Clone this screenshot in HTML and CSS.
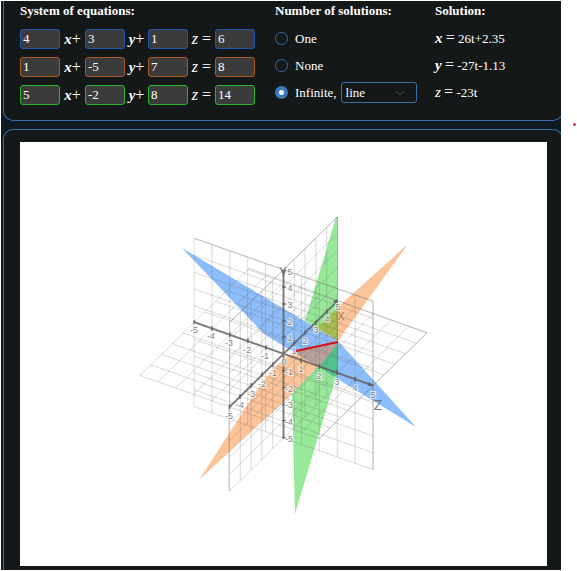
FILE: index.html
```html
<!DOCTYPE html>
<html lang="en">
<head>
<meta charset="utf-8">
<title>Systems of equations</title>
<link rel="stylesheet" href="styles.css">
</head>
<body>
<main class="shell">
  <form class="panel controls">
    <section class="system">
      <h2>System of equations:</h2>
      <div class="equation blue">
        <input aria-label="First x coefficient" value="4"><span class="var"><b>x</b>+</span>
        <input aria-label="First y coefficient" value="3"><span class="var"><b>y</b>+</span>
        <input aria-label="First z coefficient" value="1"><span class="var"><i>z</i> =</span>
        <input aria-label="First constant" value="6">
      </div>
      <div class="equation orange">
        <input aria-label="Second x coefficient" value="1"><span class="var"><b>x</b>+</span>
        <input aria-label="Second y coefficient" value="-5"><span class="var"><b>y</b>+</span>
        <input aria-label="Second z coefficient" value="7"><span class="var"><i>z</i> =</span>
        <input aria-label="Second constant" value="8">
      </div>
      <div class="equation green">
        <input aria-label="Third x coefficient" value="5"><span class="var"><b>x</b>+</span>
        <input aria-label="Third y coefficient" value="-2"><span class="var"><b>y</b>+</span>
        <input aria-label="Third z coefficient" value="8"><span class="var"><i>z</i> =</span>
        <input aria-label="Third constant" value="14">
      </div>
    </section>
    <section class="count">
      <h2>Number of solutions:</h2>
      <div class="line"><input type="radio" name="count" id="one"><label for="one">One</label></div>
      <div class="line"><input type="radio" name="count" id="none"><label for="none">None</label></div>
      <div class="line"><input type="radio" name="count" id="infinite" checked><label for="infinite">Infinite,</label>
        <span class="pick">
          <select aria-label="Kind of intersection"><option>line</option><option>plane</option></select>
          <svg class="chevron" viewBox="0 0 10 6"><path d="M1 1l4 4 4-4"/></svg>
        </span>
      </div>
    </section>
    <section class="solution">
      <h2>Solution:</h2>
      <div class="line"><span><b class="math">x</b> <span class="eq">=</span> 26t+2.35</span></div>
      <div class="line"><span><b class="math">y</b> <span class="eq">=</span> -27t-1.13</span></div>
      <div class="line"><span><i class="math">z</i> <span class="eq">=</span> -23t</span></div>
    </section>
  </form>
  <section class="panel graph">
    <svg class="plot" viewBox="20 142 527 424" role="img" aria-label="Three planes meeting in a line">
      <defs>
        <path id="grid" d="M-4-5V5M-3-5V5M-2-5V5M-1-5V5M0-5V5M1-5V5M2-5V5M3-5V5M4-5V5M-5-4H5M-5-3H5M-5-2H5M-5-1H5M-5 0H5M-5 1H5M-5 2H5M-5 3H5M-5 4H5M-5-5H5V5H-5Z"/>
      </defs>
      <!-- planes -->
      <path class="fill-green" d="M336 217L338 217L338 341L305 321Z"/>
      <path class="fill-orange" d="M408 244L338 341L317 328L338 307Z"/>
      <path class="fill-olive" d="M338 307L338 341L317 328Z"/>
      <path class="fill-blue" d="M182 248L338 341L416 427L264 334Z"/>
      <path class="fill-orange" d="M285 358L296 351L338 341L338 345L292 394L199 480L259 387L272 370Z"/>
      <path class="fill-green" d="M292 394L338 345L338 372L333 387L295 514Z"/>
      <path class="fill-brown" d="M296 351L338 341L338 345L319 367L293 352Z"/>
      <path class="fill-teal" d="M338 343L338 375L333 376L319 367Z"/>
      <!-- coordinate grids -->
      <g class="grids">
        <use href="#grid" transform="matrix(17.9 6.3 0 16.8 283.5 354)"/>
        <use href="#grid" transform="matrix(10.8 -10.6 0 16.8 283.5 354)"/>
        <use href="#grid" transform="matrix(17.9 6.3 10.8 -10.6 283.5 354)"/>
      </g>
      <path class="edge" d="M194 238L373 301V470M229 323L337 217M229 491V407M319 439L427 333L248 268"/>
      <!-- axes and ticks -->
      <path class="axis" d="M194 322L373 385.500M229.500 407L337.500 301M283.500 270V438"/>
      <path class="tick" d="M194 320v4M212 326v5M230 332v5M248 338v5M266 345v5M301 358v5M319 364v5M337 370v5M355 377v5M229.500 404v5M240 394v5M251 383v5M262 372v5M273 362v5M294 340v5M305 330v5M316 320v5M327 309v5M282 287h4M282 304h4M282 321h4M282 337h4M282 371h4M282 388h4M282 405h4M282 421h4M282 438h4"/>
      <path class="arrow" d="M374 386l-5-4-1 4ZM338 299l-5 2 3 3ZM281 270h5l-2 6Z"/>
      <g class="numbers">
        <text x="194" y="333">-5</text><text x="211" y="339">-4</text><text x="229" y="346">-3</text><text x="247" y="353">-2</text><text x="265" y="359">-1</text>
        <text x="301" y="372">1</text><text x="319" y="379">2</text><text x="337" y="385">3</text><text x="355" y="391">4</text><text x="373" y="398">5</text>
        <text x="229" y="419">-5</text><text x="240" y="408">-4</text><text x="251" y="397">-3</text><text x="262" y="387">-2</text><text x="273" y="376">-1</text><text x="284" y="365">0</text>
        <text x="294" y="354">1</text><text x="305" y="344">2</text><text x="316" y="333">3</text><text x="327" y="322">4</text><text x="338" y="310">5</text>
        <text x="290" y="275">5</text><text x="290" y="291">4</text><text x="290" y="308">3</text><text x="290" y="325">2</text><text x="290" y="341">1</text>
        <text x="289" y="375">-1</text><text x="289" y="392">-2</text><text x="289" y="408">-3</text><text x="289" y="425">-4</text><text x="289" y="442">-5</text>
      </g>
      <text class="axis-name" x="283" y="276">Y</text>
      <text class="axis-name z" x="378" y="410">Z</text>
      <text class="axis-name x" x="341" y="320">X</text>
      <path class="intersection" d="M296 351L338 342"/>
    </svg>
  </section>
</main>
<aside class="gutter"><span class="dot"></span></aside>
</body>
</html>
```
FILE: styles.css
```css
* { box-sizing: border-box; }
body {
  margin: 0;
  padding: 1px 0 1px 1px;
  display: flex;
  background: #fff;
  color: #fff;
  font: 14px/16px "Liberation Serif", serif;
}
.shell {
  flex: 1;
  min-width: 0;
  overflow: hidden;
  background: #101a22;
  padding-left: 2px;
}
.panel {
  margin-right: -2px;
  background: #141818;
  border: 1px solid #356fa5;
}
.controls {
  border-top: 0;
  border-radius: 0 0 10px 10px;
  display: grid;
  grid-template-columns: 255px 160px 1fr;
  padding: 2px 0 13px 16px;
}
h2 {
  margin: 0 0 9px;
  font-size: 13px;
  line-height: 16px;
}
.equation {
  display: grid;
  grid-template-columns: 40px 25px 40px 23px 40px 27px 40px;
  height: 20px;
  margin-bottom: 8px;
}
.equation:last-child { margin-bottom: 2px; }
.system h2 { margin-bottom: 10px; }
.equation input {
  width: 40px;
  height: 20px;
  padding: 0 2px;
  border: 1px solid #1f57b0;
  border-radius: 3px;
  background: #3b3b3b;
  color: #fff;
  font: inherit;
  font-size: 13px;
}
.orange input { border-color: #ac5820; }
.green input { border-color: #28b52c; }
.var {
  text-align: center;
  font-size: 16px;
  line-height: 20px;
  white-space: nowrap;
}
.var b, .math { font-style: italic; font-size: 15px; }
.line {
  display: flex;
  align-items: center;
  height: 27px;
  white-space: nowrap;
  font-size: 13px;
}
.count h2, .solution h2 { margin-bottom: 6px; }
.line label { margin-left: 7px; }
.line input {
  appearance: none;
  width: 13px;
  height: 13px;
  margin: 0;
  border: 1px solid #356fa5;
  border-radius: 50%;
}
.line input:checked {
  border: 4px solid #387cba;
  background: #fff;
}
.pick {
  position: relative;
  margin-left: 4px;
}
.pick select {
  display: block;
  appearance: none;
  width: 76px;
  height: 21px;
  padding: 0 4px;
  border: 1px solid #356fa5;
  border-radius: 3px;
  background: #141818;
  color: #fff;
  font: inherit;
}
.chevron {
  position: absolute;
  right: 12px;
  top: 8px;
  width: 10px;
  height: 6px;
  fill: none;
  stroke: #454b4e;
  pointer-events: none;
}
.eq { font-size: 16px; }
.graph {
  margin-top: 8px;
  border-bottom: 0;
  border-radius: 10px 10px 0 0;
  padding: 12px 15px 4px 16px;
}
.plot {
  display: block;
  width: 100%;
  background: #fff;
}
.fill-blue { fill: #8dbdfa; }
.fill-orange { fill: #fdc499; }
.fill-green { fill: #98e899; }
.fill-olive { fill: #a6bd50; }
.fill-brown { fill: #baa09d; }
.fill-teal { fill: #4fc48e; }
.grids {
  fill: none;
  stroke: #666;
  stroke-opacity: .24;
  stroke-width: 1;
}
.grids use, #grid { vector-effect: non-scaling-stroke; }
.edge { fill: none; stroke: #666; stroke-opacity: .3; }
.axis { fill: none; stroke: #626262; stroke-width: 2; stroke-opacity: .75; }
.tick { fill: none; stroke: #555; stroke-width: 2; stroke-opacity: .5; }
.arrow { fill: #666; }
.numbers {
  font: 9px "Liberation Sans", sans-serif;
  fill: #858585;
  stroke: #fff;
  stroke-width: 2;
  stroke-opacity: .7;
  paint-order: stroke;
  text-anchor: middle;
}
.axis-name {
  font: 12px "Liberation Sans", sans-serif;
  fill: #777;
  text-anchor: middle;
}
.axis-name.z { font-size: 14px; }
.axis-name.x { font-size: 10px; fill: #a47845; }
.intersection { stroke: #d4101c; stroke-width: 2; }
.gutter {
  width: 16px;
  padding: 122px 0 0 12px;
}
.dot {
  display: block;
  width: 3px;
  height: 3px;
  border-radius: 50%;
  background: #d8304a;
}
```
